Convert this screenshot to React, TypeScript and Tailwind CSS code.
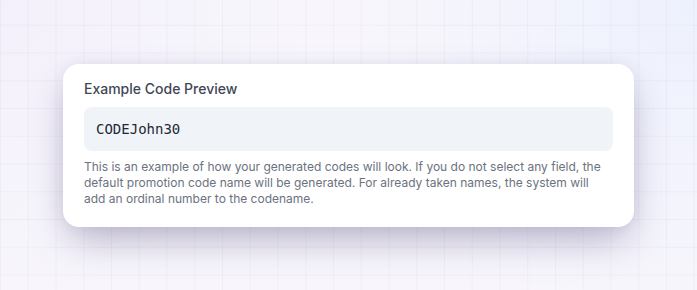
export default function App() {
  return (
    <div
      className="flex h-[290px] w-full items-center justify-center bg-[#f8f6fc]"
      style={{ fontFamily: "Inter, 'Noto Sans', sans-serif" }}
    >
      {/* Background grid with soft tint */}
      <div className="relative flex h-full w-full items-center justify-center bg-[radial-gradient(circle_at_100%_0%,#edf1fd_0%,rgba(237,241,253,0)_45%),radial-gradient(circle_at_0%_0%,#f3f0fb_0%,rgba(243,240,251,0)_40%)]">
        <div className="pointer-events-none absolute inset-0 bg-[linear-gradient(to_right,rgba(120,110,170,0.06)_1px,transparent_1px),linear-gradient(to_bottom,rgba(120,110,170,0.06)_1px,transparent_1px)] bg-[size:27.75px_27.75px] bg-[position:0px_-3px]" />

        {/* Card */}
        <div className="relative w-[571px] rounded-2xl bg-white px-[21px] pb-5 pt-[15px] shadow-[0_18px_38px_-6px_rgba(70,62,110,0.36),0_0_14px_rgba(90,80,140,0.08)]">
          <h3 className="text-sm font-medium leading-5 text-[#3f4756]">Example Code Preview</h3>
          <div className="mt-2 flex h-11 items-center rounded-lg bg-[#f0f3f8] px-3">
            <span
              className="text-sm text-[#1f2937]"
              style={{ fontFamily: "'DejaVu Sans Mono', monospace" }}
            >
              CODEJohn30
            </span>
          </div>
          <p className="mt-2 text-xs leading-4 text-[#6b7280]">
            This is an example of how your generated codes will look. If you do not select any field, the
            default promotion code name will be generated. For already taken names, the system will
            add an ordinal number to the codename.
          </p>
        </div>
      </div>
    </div>
  );
}
